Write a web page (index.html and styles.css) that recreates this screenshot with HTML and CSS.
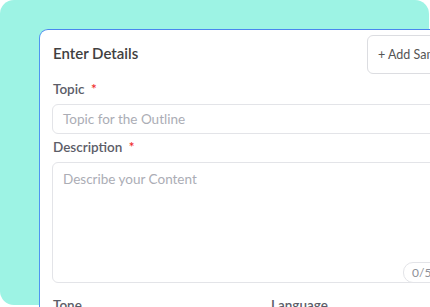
FILE: index.html
```html
<!DOCTYPE html>
<html>
<head>
<meta charset="utf-8">
<link rel="stylesheet" href="styles.css">
</head>
<body>
<div class="stage">
  <div class="bg">
    <div class="card">
      <div class="header">
        <h2 class="title">Enter Details</h2>
        <button class="add-btn">+ Add Sample Input</button>
      </div>
      <label class="label">Topic <span class="req">*</span></label>
      <div class="input">Topic for the Outline</div>
      <label class="label">Description <span class="req">*</span></label>
      <div class="textarea">
        <span class="ph">Describe your Content</span>
        <span class="counter">0/500</span>
      </div>
      <div class="row">
        <label class="label">Tone</label>
        <label class="label">Language</label>
      </div>
    </div>
  </div>
</div>
</body>
</html>
```
FILE: styles.css
```css
* { box-sizing: border-box; }
html, body { margin: 0; padding: 0; background: #ffffff; }
body { font-family: "Lato", "Liberation Sans", sans-serif; }
.stage { width: 430px; height: 307px; overflow: hidden; }
.bg {
  width: 429px;
  height: 305px;
  background: #9df3e4;
  border-radius: 14px;
  padding: 29px 0 0 39px;
}
.card {
  width: 450px;
  background: #ffffff;
  border-top: 1px solid #4a86ee;
  border-left: 1px solid #4f94f0;
  border-top-left-radius: 9px;
  padding: 5px 12px 0 12px;
}
.header {
  display: flex;
  justify-content: space-between;
  align-items: center;
  height: 39px;
  margin-bottom: 6px;
}
.title {
  margin: 0;
  font-size: 15px;
  font-weight: 600;
  color: #404040;
  padding-left: 1px;
  margin-top: -3px;
}
.add-btn {
  width: 110px;
  height: 39px;
  background: #fff;
  border: 1px solid #dcdde1;
  border-radius: 6px;
  font-family: inherit;
  font-size: 12.5px;
  color: #555;
  text-align: left;
  padding: 0 10px;
  white-space: nowrap;
  overflow: hidden;
}
.label {
  display: block;
  font-size: 13.5px;
  font-weight: 600;
  color: #5c5d68;
  line-height: 18px;
  margin-bottom: 6px;
  padding-left: 1px;
}
.req { color: #ef2a2a; margin-left: 3px; }
.input {
  height: 30px;
  border: 1px solid #e3e4e8;
  border-radius: 6px;
  padding: 0 10px;
  font-size: 13.5px;
  line-height: 28px;
  color: #abadb5;
  margin-bottom: 4px;
}
.textarea {
  position: relative;
  height: 121px;
  border: 1px solid #e3e4e8;
  border-radius: 6px;
  padding: 7px 10px;
  font-size: 13.5px;
  color: #abadb5;
  margin-top: 1px;
  margin-bottom: 13px;
}
.ph { display: block; line-height: 18px; }
.counter {
  position: absolute;
  left: 350px;
  bottom: -1px;
  height: 21px;
  padding: 0 8px;
  border: 1px solid #e3e4e8;
  border-radius: 10px;
  background: #fff;
  font-size: 12px;
  line-height: 19px;
  color: #8d8f97;
}
.row {
  display: grid;
  grid-template-columns: 206px 206px;
  column-gap: 12px;
}
```
